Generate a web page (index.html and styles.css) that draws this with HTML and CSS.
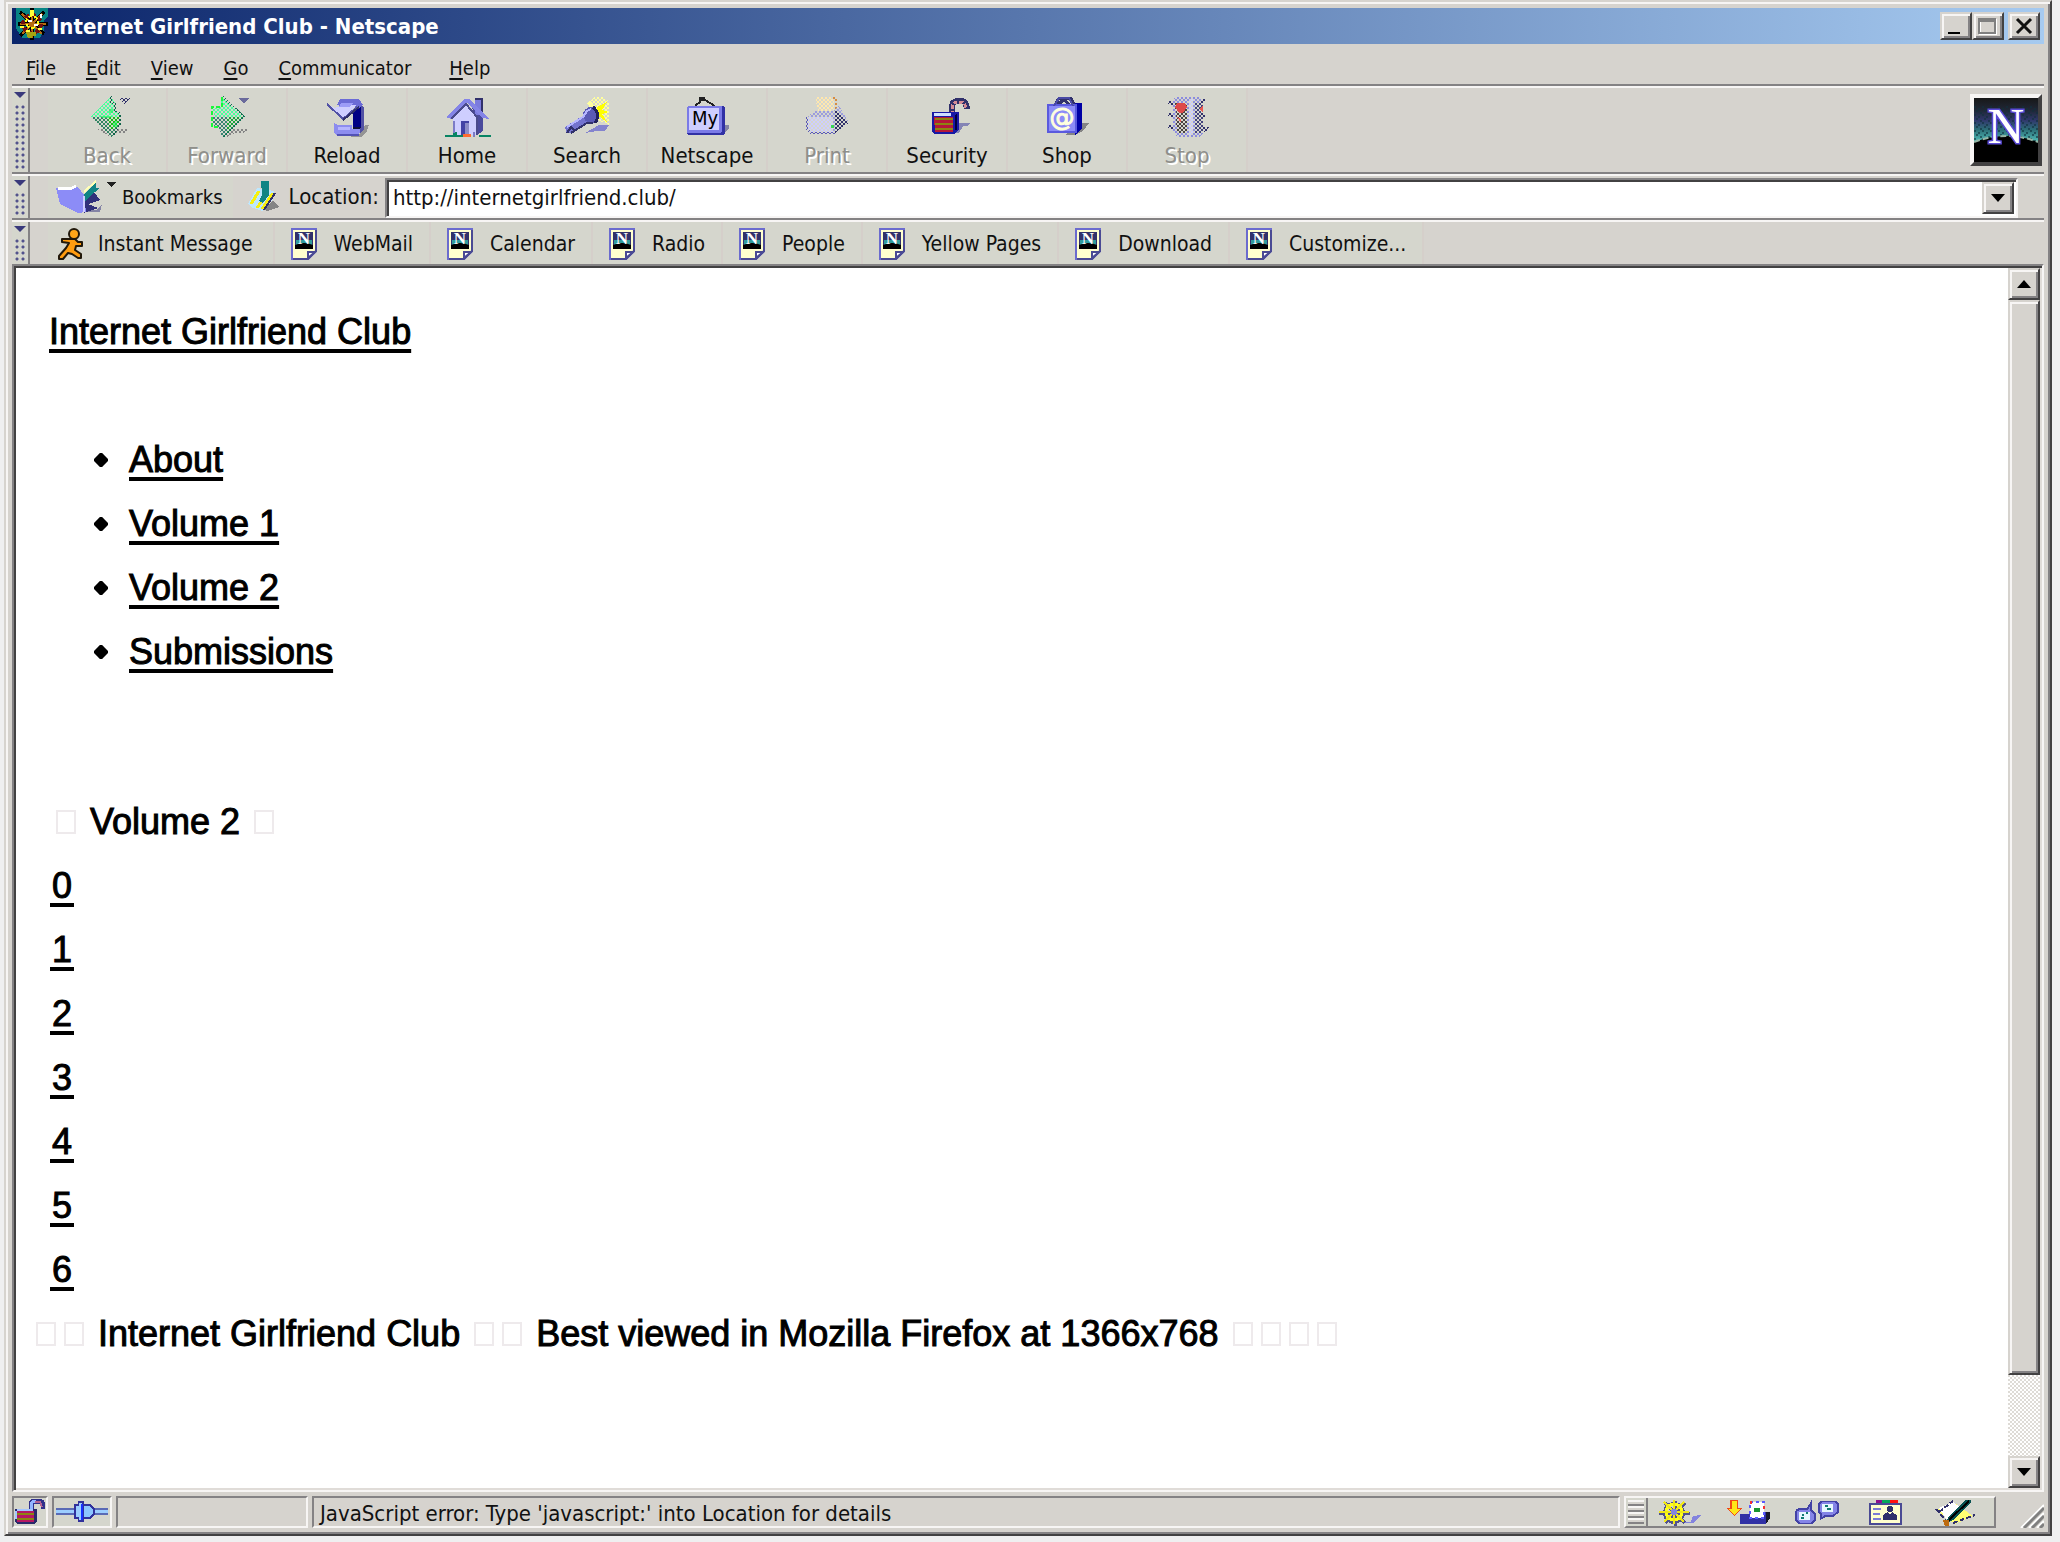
FILE: index.html
```html
<!DOCTYPE html>
<html lang="en">
<head>
<meta charset="utf-8">
<title>Internet Girlfriend Club - Netscape</title>
<link rel="stylesheet" href="styles.css">
</head>
<body>
<svg class="defs" aria-hidden="true">
  <defs>
    <pattern id="dither" width="4" height="4" patternUnits="userSpaceOnUse">
      <rect width="2" height="2" fill="#d5d6cd"/><rect x="2" y="2" width="2" height="2" fill="#d5d6cd"/>
    </pattern>
    <linearGradient id="night" x1="0" y1="0" x2="0" y2="1">
      <stop offset="0" stop-color="#181818"/><stop offset=".2" stop-color="#202838"/><stop offset=".35" stop-color="#30386c"/><stop offset=".5" stop-color="#2c7078"/><stop offset=".66" stop-color="#4cb4b0"/>
    </linearGradient>
    <pattern id="stars" width="8" height="8" patternUnits="userSpaceOnUse">
      <path d="M0 0h2v2h-2zM4 2h2v2h-2zM2 4h2v2h-2zM6 6h2v2h-2z" fill="#10303c"/>
    </pattern>
    <symbol id="page" viewBox="0 0 26 32">
      <path d="M1 1H25V23L17 31H1Z" fill="#ffffce" stroke="#6b6bce" stroke-width="2"/>
      <path d="M25 2V23L17 31H2" fill="none" stroke="#4a4a94" stroke-width="2"/>
      <path d="M17 30V24H24Z" fill="#fff" stroke="#4a4a94" stroke-width="2"/>
      <rect x="4" y="4" width="18" height="17" fill="#31316b"/>
      <path d="M5 12h16v5H5z" fill="#319c9c"/>
      <path d="M4 21v-4q9-4 18 0v4z" fill="#000"/>
      <text x="13" y="16" text-anchor="middle" font-family="Liberation Serif, serif" font-weight="bold" font-size="17" fill="#fff">N</text>
    </symbol>
  </defs>
</svg>

<div class="window">
  <header class="titlebar">
    <svg class="title-icon" viewBox="0 0 32 32" shape-rendering="crispEdges" aria-hidden="true">
      <path d="M0 0h32v8l-4 4v10l-4 8H6L0 20z" fill="#088484"/>
      <path d="M4 4l24 22M28 4L4 28M16 0v32M2 16h30" stroke="#000" stroke-width="4"/>
      <path d="M6 6l20 20M26 6L6 26M16 2v28M4 16h26" stroke="#b56b10" stroke-width="2"/>
      <circle cx="16" cy="16" r="9" fill="none" stroke="#731010" stroke-width="4" stroke-dasharray="4 3"/>
      <circle cx="16" cy="14" r="6" fill="none" stroke="#ffff10" stroke-width="2" stroke-dasharray="4 2"/>
      <path d="M14 2h4v6h-4zM4 18h4v2H4zM22 20h4v2h-4zM10 22h4v4h-4z" fill="#ffff39"/>
      <path d="M12 12h4v2h-4zM18 16h4v2h-4zM24 6h2v4h-2z" fill="#fff"/>
      <path d="M10 24h10v4h-4v2h-4z" fill="#a5a510"/>
    </svg>
    <h1>Internet Girlfriend Club - Netscape</h1>
    <div class="captions">
      <button class="raised" type="button" aria-label="Minimize"><svg viewBox="0 0 24 20" shape-rendering="crispEdges"><path d="M4 16h12v2H4z"/></svg></button>
      <button class="raised" type="button" aria-label="Maximize" disabled><svg viewBox="0 0 24 20" shape-rendering="crispEdges"><path d="M4 4h16v14H4z" fill="none" stroke="#fff" stroke-width="2"/><path d="M3 3h16v14H3zM3 5h16" fill="none" stroke="#808080" stroke-width="2"/></svg></button>
      <button class="raised close" type="button" aria-label="Close"><svg viewBox="0 0 24 20"><path d="M5 3l14 14M19 3L5 17" stroke="#111" stroke-width="3"/></svg></button>
    </div>
  </header>

  <nav class="menubar" aria-label="Menu">
    <button type="button"><u>F</u>ile</button>
    <button type="button"><u>E</u>dit</button>
    <button type="button"><u>V</u>iew</button>
    <button type="button"><u>G</u>o</button>
    <button type="button"><u>C</u>ommunicator</button>
    <button type="button" class="help"><u>H</u>elp</button>
  </nav>

  <div class="toolbar main">
    <span class="grip"></span>
    <div class="tools">
      <button type="button" disabled>
        <svg viewBox="0 0 44 44" shape-rendering="crispEdges"><path d="M12 34h32l-4 4H30l-4 4z" fill="#848484"/><path d="M26 1L5 22H36V18L30 14V8Z" fill="#4aff9c"/><path d="M5 22L26 43L34 32V22Z" fill="#318463"/><path d="M22 22h14l-4 10-6 4z" fill="#18bd18"/><path d="M26 1v6l4 2v6l5 4v11l-7 10" fill="none" stroke="#10634a" stroke-width="2"/><path d="M33 3h12l-6 6z" fill="#31316b"/><rect width="46" height="44" fill="url(#dither)"/><path d="M14 21h14l-4 2h-6zM24 14h4v4h-4zM30 26h2v6h-4v-4z" fill="#18f75a" opacity=".6"/></svg>
        <span>Back</span></button>
      <button type="button" disabled>
        <svg viewBox="0 0 44 44" shape-rendering="crispEdges"><path d="M20 34h24l-6 4H30l-8 4z" fill="#848484"/><path d="M17 1L39 22H10L8 14L16 12Z" fill="#4aff9c"/><path d="M39 22L18 43L14 34L8 30V22Z" fill="#398473"/><path d="M22 22h16L22 38z" fill="#18a539"/><path d="M17 1L39 22L18 43" fill="none" stroke="#107352" stroke-width="2"/><rect width="46" height="44" fill="url(#dither)"/><path d="M17 2V12H7V32H14" fill="none" stroke="#18f739" stroke-width="2" stroke-dasharray="4 2"/><path d="M34 3h10l-5 6z" fill="#6b6b9c"/></svg>
        <span>Forward</span></button>
      <button type="button">
        <svg viewBox="0 0 44 44" shape-rendering="crispEdges"><path d="M24 40h10l6-10h4l-2 6-6 6H26z" fill="#949494"/><path d="M28 14l8-6v28h-8V20z" fill="#000084"/><path d="M34 8l5 4v22l-3 4h-4l4-6V12z" fill="#5252a5"/><path d="M28 32h8l-4 6h-4z" fill="#10103a"/><path d="M15 4h19l4 6-4 3-6-2-7 1-9-2z" fill="#6b6bd6"/><path d="M2 9l8 4 8-3h13L18 24z" fill="#ceceff"/><path d="M16 8h12l-4 4H14z" fill="#9c9cf7"/><path d="M2 9L18 24L32 12" fill="none" stroke="#5252a5" stroke-width="2"/><path d="M18 25L34 12" stroke="#31316b" stroke-width="2"/><path d="M9 28l4 2h14v4h8v4l-4 3H13l-4-3z" fill="#8c8cef"/><path d="M13 32h12v3H13z" fill="#b5b5ff"/><path d="M12 40h22" stroke="#5252b5" stroke-width="2"/></svg>
        <span>Reload</span></button>
      <button type="button">
        <svg viewBox="0 0 44 44" shape-rendering="crispEdges"><path d="M8 22L22 8l10 14v18H8z" fill="#ceceff"/><path d="M24 8l14 14v14l-6 4V22z" fill="#4a4a9c"/><path d="M30 4h6v16h-6z" fill="#7b7bde"/><path d="M36 4h2v14h-2zM30 3h8v2h-8z" fill="#31316b"/><path d="M1 22L20 4h4l21 20-8-1-15-15L6 24z" fill="#8484e7"/><path d="M6 24L21 9L32 22v18" fill="none" stroke="#4a4a8c" stroke-width="2"/><path d="M16 26h8v14h-8z" fill="#4242a5"/><path d="M20 28h4v12h-4z" fill="#8c8cc6"/><path d="M0 40h8v-3h4v3h6v2H0zM34 40h12v2H34z" fill="#088463"/><path d="M18 39h8v3h-8z" fill="#ff6b31"/><path d="M28 37h2v5h-2zM8 26h2v12H8z" fill="#7b7bc6"/></svg>
        <span>Home</span></button>
      <button type="button">
        <svg viewBox="0 0 44 44" shape-rendering="crispEdges"><path d="M22 8l8-6h8l6 4v24l-10-4z" fill="#ffff9c"/><path d="M22 2h22v28H34V16z" fill="url(#dither)"/><path d="M32 12l10-5-5 8 7 2-7 2 5 8-10-7z" fill="#ffff00"/><path d="M20 38l14-8h10l-4 6h-8z" fill="#8484ce"/><path d="M0 32l14-9 6-3 8 6-10 4L6 38H2z" fill="#7373ce"/><circle cx="26" cy="20" r="8" fill="#5a5ab5"/><path d="M2 32l16-10 4-6 4-2" fill="none" stroke="#b5b5ff" stroke-width="2"/><path d="M28 12q8 7 2 16" fill="none" stroke="#21215a" stroke-width="3"/><path d="M2 38l4-6 4 4M6 38l16-10h6" fill="none" stroke="#31316b" stroke-width="2"/></svg>
        <span>Search</span></button>
      <button type="button">
        <svg viewBox="0 0 44 44" shape-rendering="crispEdges"><path d="M36 30h8v4l-8 6z" fill="#8484a5"/><path d="M10 11l6-5M20 5l10 6" stroke="#212121" stroke-width="2"/><path d="M14 2h6v4h-4v2h-2z" fill="#212121"/><rect x="2" y="11" width="38" height="29" rx="3" fill="#3131a5"/><rect x="2" y="11" width="35" height="27" rx="2" fill="#7b7be7"/><rect x="4" y="13" width="30" height="22" fill="#ceceff"/><text x="20" y="30" text-anchor="middle" font-family="DejaVu Sans Condensed, DejaVu Sans, sans-serif" font-size="20" fill="#000">My</text></svg>
        <span>Netscape</span></button>
      <button type="button" disabled>
        <svg viewBox="0 0 44 44" shape-rendering="crispEdges"><path d="M10 2h20l-2 18H14z" fill="#ffe7ad"/><path d="M26 3h5v13" fill="none" stroke="#d68c42" stroke-width="2"/><path d="M2 22l8-6h18l6-6 10 18-14 10H4l-2-4z" fill="#9c9cde"/><path d="M30 14l14 14-14 10V24z" fill="#31316b"/><path d="M2 22h26v16H4z" fill="#ceceff"/><path d="M2 22v12l4 4h24" fill="none" stroke="#5a5ab5" stroke-width="2"/><rect width="44" height="44" fill="url(#dither)"/><path d="M26 30h3v3h-3z" fill="#39d652"/></svg>
        <span>Print</span></button>
      <button type="button">
        <svg viewBox="0 0 44 44" shape-rendering="crispEdges"><path d="M32 28h14l-4 3h-4l-4 7h-4z" fill="#8484b5"/><path d="M27 20V12q0-6 6-6h4q4 0 5 8" fill="none" stroke="#31316b" stroke-width="6"/><path d="M27 20V12q0-5 6-5h4q3 0 4 7" fill="none" stroke="#d68c94" stroke-width="3" stroke-dasharray="4 2"/><path d="M7 17H34V34L30 39H9L7 37Z" fill="#1818a5"/><path d="M9 18H26V21H9z" fill="#cedeff"/><path d="M9 22H28V37H10z" fill="#b51839"/><path d="M10 23h18v2H10zM10 28h18v2H10zM10 33h18v2H10z" fill="#8c8410"/><path d="M32 18v17h-2V20z" fill="#000042"/></svg>
        <span>Security</span></button>
      <button type="button">
        <svg viewBox="0 0 44 44" shape-rendering="crispEdges"><path d="M36 28h8l-6 8-8 4H20z" fill="#848484"/><path d="M30 8h7v26l-7 6z" fill="#0000a5"/><path d="M9 12l5-9h12l4 9M13 10l6-6M19 5l7 6" fill="none" stroke="#31316b" stroke-width="3"/><path d="M2 9h30v29H2z" fill="#5a5ade"/><path d="M4 11h26v25H4z" fill="#8c8cf7"/><path d="M9 11l5-8h10l4 8" fill="none" stroke="#4a4aa5" stroke-width="2"/><text x="17" y="31" text-anchor="middle" font-family="DejaVu Sans, sans-serif" font-size="25" fill="#ffffde" stroke="#ffffde">@</text></svg>
        <span>Shop</span></button>
      <button type="button" disabled>
        <svg viewBox="0 0 44 44" shape-rendering="crispEdges"><path d="M10 2h24l4 4v32l-4 4H12l-4-6V6z" fill="#8c8cde"/><path d="M10 8h12v30H12z" fill="#4a4242"/><path d="M30 8h8v30h-8z" fill="#42427b"/><path d="M2 6h6v4H4zM2 18h6v4H4zM2 30h6v4H4zM36 4h4v4h-4zM36 18h4v4h-4zM36 32h8l-4 6z" fill="#31316b"/><path d="M24 4h4v36h-4z" fill="#ceceff"/><rect width="44" height="44" fill="url(#dither)"/><path d="M12 8h8l2 4-4 6h-4l-4-6z" fill="#de4a4a"/><path d="M34 14l4-4v8zM12 22l4 2v4z" fill="#e75a52"/></svg>
        <span>Stop</span></button>
    </div>
    <a class="logo" href="#" aria-label="Netscape">
      <svg viewBox="0 0 64 64"><rect width="64" height="64" fill="url(#night)"/><rect y="8" width="64" height="36" fill="url(#stars)" opacity=".6"/><path d="M0 64V44Q32 32 64 44V64Z" fill="#000"/><path d="M0 44Q32 32 64 44" fill="none" stroke="#94b5a5" stroke-width="2" stroke-dasharray="6 3"/><text x="32" y="45" text-anchor="middle" font-family="Liberation Serif, serif" font-size="51" fill="#fff" stroke="#5a4ad6" stroke-width="3" paint-order="stroke">N</text></svg>
    </a>
  </div>

  <div class="toolbar location">
    <span class="grip"></span>
    <button class="bookmarks" type="button">
      <svg viewBox="0 0 62 34" shape-rendering="crispEdges"><path d="M28 30h12l6-6-2 8H30z" fill="#8484a5"/><path d="M26 16l12-4 6 8-12 4 10 4-14 5z" fill="#31317b"/><path d="M0 8l12 2 10-3 6 8 2 17-8 1-18-9z" fill="#8c8cf7"/><path d="M2 8l12 1 6-3" stroke="#fff" stroke-width="3" fill="none"/><path d="M28 14L40 2v6h4L34 16l-6 6z" fill="#108484"/><path d="M28 12L40 1" stroke="#ffffb5" stroke-width="2"/><path d="M28 16v16" stroke="#ceceff" stroke-width="2"/><path d="M50 2h10l-5 5z" fill="#212121"/></svg>
      <span>Bookmarks</span></button>
    <svg class="quickfile" viewBox="0 0 32 32" shape-rendering="crispEdges" aria-hidden="true"><path d="M16 28l10-8 6 6-12 4z" fill="#848484"/><path d="M1 23L10 7l17 3-1 8-10 12-10-3z" fill="#bde7ff"/><path d="M4 23l8-13M10 27l10-15M15 28l11-16" stroke="#f7ef10" stroke-width="3"/><path d="M14 0h8v14l-6 8-4-2 3-6z" fill="#108484"/><path d="M28 12L17 29" stroke="#31316b" stroke-width="2"/></svg>
    <label for="url">Location:</label>
    <div class="urlbox">
      <input id="url" type="text" value="http://internetgirlfriend.club/">
      <button class="raised" type="button" aria-label="Recent locations"><svg viewBox="0 0 14 8"><path d="M0 0h14L7 8z"/></svg></button>
    </div>
  </div>

  <div class="toolbar personal">
    <span class="grip"></span>
    <div class="links">
      <a href="#"><svg viewBox="0 0 26 32"><circle cx="16" cy="6" r="5" fill="#ffa518" stroke="#21180a" stroke-width="2"/><path d="M4 11l8 0h5l3 3h4v4h-6l-1 4 6 4v4h-3l-6-4-4-1-5 6H1v-3l7-8 3-5-7-1z" fill="#ff9c10" stroke="#21180a" stroke-width="2" stroke-linejoin="round"/></svg><span>Instant Message</span></a>
      <a href="#"><svg viewBox="0 0 26 32"><use href="#page"/></svg><span>WebMail</span></a>
      <a href="#"><svg viewBox="0 0 26 32"><use href="#page"/></svg><span>Calendar</span></a>
      <a href="#"><svg viewBox="0 0 26 32"><use href="#page"/></svg><span>Radio</span></a>
      <a href="#"><svg viewBox="0 0 26 32"><use href="#page"/></svg><span>People</span></a>
      <a href="#"><svg viewBox="0 0 26 32"><use href="#page"/></svg><span>Yellow Pages</span></a>
      <a href="#"><svg viewBox="0 0 26 32"><use href="#page"/></svg><span>Download</span></a>
      <a href="#"><svg viewBox="0 0 26 32"><use href="#page"/></svg><span>Customize...</span></a>
    </div>
  </div>

  <div class="viewport">
    <main>
      <p><a href="#">Internet Girlfriend Club</a></p>
      <ul>
        <li><a href="#">About</a></li>
        <li><a href="#">Volume 1</a></li>
        <li><a href="#">Volume 2</a></li>
        <li><a href="#">Submissions</a></li>
      </ul>
      <h2><i class="box"></i> Volume 2 <i class="box"></i></h2>
      <p><a class="num" href="#">0</a></p>
      <p><a class="num" href="#">1</a></p>
      <p><a class="num" href="#">2</a></p>
      <p><a class="num" href="#">3</a></p>
      <p><a class="num" href="#">4</a></p>
      <p><a class="num" href="#">5</a></p>
      <p><a class="num" href="#">6</a></p>
      <footer><i class="box"></i><i class="box"></i> Internet Girlfriend Club <i class="box"></i><i class="box"></i> Best viewed in Mozilla Firefox at 1366x768 <i class="box"></i><i class="box"></i><i class="box"></i><i class="box"></i></footer>
    </main>
    <div class="scrollbar">
      <button class="raised" type="button" aria-label="Scroll up"><svg viewBox="0 0 14 8"><path d="M0 8h14L7 0z"/></svg></button>
      <div class="thumb raised"></div>
      <div class="trough"></div>
      <button class="raised" type="button" aria-label="Scroll down"><svg viewBox="0 0 14 8"><path d="M0 0h14L7 8z"/></svg></button>
    </div>
  </div>

  <div class="statusbar">
    <div class="panel secure"><svg viewBox="0 0 30 26" shape-rendering="crispEdges"><path d="M16 12V6q0-4 5-4h3q4 0 5 8" fill="none" stroke="#31318c" stroke-width="5"/><path d="M16 12V6q0-4 5-4" fill="none" stroke="#94b5ff" stroke-width="3"/><path d="M20 3h5l2 5" fill="none" stroke="#b56394" stroke-width="2"/><path d="M0 10h22v12l-2 3H2l-2-3z" fill="#29296b"/><path d="M2 12h17v11H2z" fill="#b51863"/><path d="M2 14h17v2H2zM2 19h17v2H2z" fill="#8c8410"/><path d="M2 10h16v2H2zM0 12h2v8H0z" fill="#a5c6ff"/></svg></div>
    <div class="panel plug"><svg viewBox="0 0 52 24" shape-rendering="crispEdges"><path d="M0 8h20v7H0zM36 8h16v7H36z" fill="#5a6bb5"/><path d="M0 10h20v3H0zM36 10h16v3H36z" fill="#9cceff"/><path d="M18 4h4V1h6v3h6l5 5v5l-5 5h-6v3h-6v-3h-4z" fill="#31319c"/><path d="M20 6h3V3h3v17h-3v-3h-3z" fill="#9cceff"/><path d="M28 6h5l4 4v3l-4 4h-5z" fill="#8cc6ff"/><path d="M25 4h2v16h-2z" fill="#1831ff"/></svg></div>
    <div class="panel progress"></div>
    <div class="panel message">JavaScript error: Type 'javascript:' into Location for details</div>
    <div class="components">
      <span class="lines"></span>
      <button type="button" aria-label="Navigator"><svg viewBox="0 0 44 26" shape-rendering="crispEdges"><path d="M26 22h8l2-6 8-1-8 8H24z" fill="#8484de"/><circle cx="17" cy="13" r="9" fill="none" stroke="#52528c" stroke-width="4"/><path d="M18 1v25M2 13h31M8 3l20 20M28 3L8 23" stroke="#52528c" stroke-width="3"/><circle cx="17" cy="12" r="8" fill="none" stroke="#ffff18" stroke-width="3"/><path d="M17 0v24M2 12h30M7 2l20 20M27 2L7 22" stroke="#efe718" stroke-width="2"/><circle cx="17" cy="12" r="3" fill="#8484de"/></svg></button>
      <button type="button" aria-label="Inbox"><svg viewBox="0 0 44 26" shape-rendering="crispEdges"><path d="M4 0h8v8h4l-8 8-8-8h4z" fill="#ef4a18"/><path d="M6 1h5v8h3l-6 6-5-6h3z" fill="#ffe718"/><path d="M14 14h10l2-2h18l-4 12H14z" fill="#3131a5"/><path d="M40 12h4v6l-4 6z" fill="#18182a"/><path d="M24 2h14v16H24z" fill="#fff" stroke="#5a5aff" stroke-width="2" stroke-dasharray="3 3"/><path d="M28 8h6v4h-6z" fill="#189431"/><path d="M24 1h2v3h-2zM37 6h2v3h-2z" fill="#f73131"/></svg></button>
      <button type="button" aria-label="Newsgroups"><svg viewBox="0 0 46 26" shape-rendering="crispEdges"><path d="M1 13q0-4 5-4h7l4-7v8l4 4v6l-4 4H5l-4-4z" fill="#8484e7" stroke="#4242a5" stroke-width="2"/><path d="M4 12h12v8H4z" fill="#e7f7ff"/><path d="M7 15h2M11 13h3M6 18h3" stroke="#107b73" stroke-width="2"/><path d="M25 3l3-2h14l3 3v8l-5 4H32l-5 3V14l-2-2z" fill="#8484e7" stroke="#4242a5" stroke-width="2"/><path d="M28 4h12v8H28z" fill="#e7f7ff"/><path d="M31 6h4M33 9h5" stroke="#107b73" stroke-width="2"/></svg></button>
      <button type="button" aria-label="Address Book"><svg viewBox="0 0 44 26" shape-rendering="crispEdges"><path d="M12 0h6v4h-6z" fill="#8c108c"/><path d="M18 0h8v4h-8z" fill="#08a55a"/><path d="M26 0h8v4h-8z" fill="#ff1010"/><path d="M6 4h31v20H6z" fill="#ffffce" stroke="#4a4a94" stroke-width="2"/><path d="M9 9h8M9 14h7M9 19h8" stroke="#7b7bd6" stroke-width="2"/><circle cx="26" cy="9" r="3" fill="#31316b"/><path d="M19 20v-5l5-3 2 3 2-3 5 3v5z" fill="#31316b"/></svg></button>
      <button type="button" aria-label="Composer"><svg viewBox="0 0 44 26" shape-rendering="crispEdges"><path d="M4 10l16-8 20 14-18 8-6-4z" fill="#ffff73"/><path d="M6 8l14-6 8 6-14 12z" fill="#fff"/><path d="M3 9l11 13M20 23l22-8M6 12l14-11" stroke="#31316b" stroke-width="2" stroke-dasharray="5 2" fill="none"/><path d="M12 24l4-8L32 0h6v3L20 20z" fill="#085252"/><path d="M16 20L36 1" stroke="#000" stroke-width="2"/><path d="M10 20h6v6h-4z" fill="#bd6b10"/></svg></button>
    </div>
    <svg class="resize" viewBox="0 0 24 24" aria-hidden="true"><path d="M1 24L24 1M9 24L24 9M17 24L24 17" stroke="#fff" stroke-width="2"/><path d="M4 24L24 4M12 24L24 12M20 24L24 20" stroke="#808080" stroke-width="3"/></svg>
  </div>
</div>
</body>
</html>
```

FILE: styles.css
```css
* { box-sizing: border-box; }

:root {
  --face: #d6d3ce;
  --tint: #d5d6cd;
  --shade: #848284;
  --dark: #424142;
  --light: #f7f5f4;
}

body {
  margin: 0;
  padding: 0 8px 6px 4px;
  min-height: 100vh;
  display: flex;
  background: #efeff0;
  color: #111;
  font: 22px/24px "DejaVu Sans Condensed", "DejaVu Sans", sans-serif;
}

.defs { position: absolute; width: 0; height: 0; }

button {
  margin: 0;
  padding: 0;
  border: 0;
  background: none;
  color: inherit;
  font: inherit;
}

svg { display: block; flex: none; }

.window {
  flex: 1;
  min-width: 0;
  display: flex;
  flex-direction: column;
  padding: 6px;
  border: 2px solid;
  border-color: var(--face) var(--dark) var(--dark) var(--face);
  background: var(--face);
  box-shadow: inset 2px 2px var(--light), inset -2px -2px var(--shade);
}

.raised {
  display: grid;
  place-items: center;
  background: var(--face);
  border: 2px solid;
  border-color: var(--face) var(--dark) var(--dark) var(--face);
  box-shadow: inset 2px 2px var(--light), inset -2px -2px var(--shade);
}

/* Title bar */
.titlebar {
  display: flex;
  align-items: center;
  height: 36px;
  padding: 0 4px;
  background: linear-gradient(90deg, #0a246a, #a6caf0);
  color: #fff;
}
.titlebar h1 {
  flex: 1;
  margin: 2px 0 0 4px;
  font-size: 22px;
  line-height: 36px;
  font-weight: bold;
}
.title-icon { width: 32px; height: 32px; margin-bottom: 4px; }
.captions { display: flex; }
.captions button { width: 32px; height: 28px; }
.captions svg { width: 24px; height: 20px; }
.captions .close { margin-left: 4px; }

/* Menu bar */
.menubar {
  display: flex;
  gap: 30px;
  height: 44px;
  padding: 5px 14px 0;
  border-bottom: 2px solid var(--light);
  box-shadow: inset 0 -2px var(--shade);
  font-size: 20px;
}
.menubar u { text-decoration-thickness: 2px; text-underline-offset: 3px; }
.menubar .help { margin-left: 8px; }

/* Toolbars */
.toolbar {
  display: flex;
  padding-bottom: 2px;
  border-bottom: 2px solid var(--light);
  box-shadow: inset 0 -2px var(--shade);
}
.grip {
  width: 18px;
  padding: 4px 2px 4px;
  border-right: 2px solid var(--shade);
  background: var(--tint);
}
.grip::before {
  content: "";
  display: block;
  border: 6px solid transparent;
  border-top-color: #39397b;
  border-bottom: 0;
}
.grip::after {
  content: "";
  display: block;
  height: calc(100% - 10px);
  margin-top: 6px;
  background:
    radial-gradient(circle at 3px 3px, #52528c 1px, transparent 2px) 0 0 / 6px 6px;
}

.main { height: 88px; }
.tools { display: flex; flex: 1; padding-left: 18px; }
.tools button {
  display: flex;
  flex-direction: column;
  align-items: center;
  gap: 5px;
  width: 120px;
  padding-top: 7px;
  background: var(--tint);
  border-right: 2px solid #d5cfca;
}
.tools svg { width: 44px; height: 44px; overflow: visible; }
.tools button:disabled { color: #8f8f8b; text-shadow: 2px 2px #fff; }
.logo {
  width: 72px;
  height: 72px;
  margin: 6px 2px;
  border: 4px solid;
  border-color: var(--light) var(--dark) var(--dark) var(--light);
}
.logo svg { width: 64px; height: 64px; }

.location { height: 46px; align-items: stretch; }
.bookmarks {
  display: flex;
  align-items: center;
  gap: 4px;
  margin-left: 18px;
  padding: 0 10px 0 8px;
  background: var(--tint);
  font-size: 20px;
}
.bookmarks svg { width: 62px; height: 34px; }
.quickfile { align-self: center; width: 32px; height: 32px; margin-left: 14px; }
.location label { align-self: center; margin-left: 10px; }
.urlbox {
  flex: 1;
  display: flex;
  margin: 2px 26px 0 6px;
  border: 2px solid;
  border-color: var(--shade) var(--light) var(--light) var(--shade);
  box-shadow: inset 2px 2px var(--dark);
  padding: 2px;
  background: #fff;
}
.urlbox input {
  flex: 1;
  min-width: 0;
  padding: 0 4px;
  border: 0;
  background: none;
  color: #111;
  font: inherit;
  outline: 0;
}
.urlbox button { width: 32px; }
.urlbox svg, .scrollbar svg { width: 14px; height: 8px; }

.personal { height: 42px; padding: 0; border: 0; box-shadow: none; font-size: 21px; }
.links { display: flex; padding-left: 18px; }
.links a {
  display: flex;
  align-items: center;
  gap: 17px;
  padding: 2px 16px 0;
  background: var(--tint);
  border-right: 2px solid #d5cfca;
  color: inherit;
  text-decoration: none;
}
.links a:first-child { gap: 14px; padding: 2px 20px 0 10px; }
.links svg { width: 26px; height: 32px; }

/* Page area */
.viewport {
  flex: 1;
  display: flex;
  border: 2px solid;
  border-color: var(--shade) var(--light) var(--light) var(--shade);
  padding: 2px;
  box-shadow: inset 2px 2px var(--dark), inset -2px -2px #e0dcd8;
  background: #fff;
}
main {
  flex: 1;
  padding: 32px 16px 32px;
  color: #000;
  font: 36px/64px "Liberation Sans", Arial, sans-serif;
  -webkit-text-stroke: 1px;
}
main p, main h2 { margin: 0 0 0 16px; font: inherit; }
main a {
  padding: 0 1px;
  color: inherit;
  text-decoration: underline;
  text-decoration-thickness: 4px;
  text-underline-offset: 5px;
  text-decoration-skip-ink: none;
}
main .num {
  display: inline-block;
  height: 56px;
  margin: 0 2px;
  padding: 0 2px;
  background: linear-gradient(#000, #000) 0 49px / 100% 4px no-repeat;
  text-decoration: none;
}
main ul { margin: 64px 0 106px 16px; padding: 0 0 0 46px; list-style: none; }
main li { display: flex; align-items: center; gap: 22px; }
main li::before {
  content: "";
  width: 14px;
  height: 14px;
  margin-right: -2px;
  background: #000;
  clip-path: polygon(42% 0, 58% 0, 100% 42%, 100% 58%, 58% 100%, 42% 100%, 0 58%, 0 42%);
}
main h2 { margin-left: 20px; }
.box {
  display: inline-block;
  width: 20px;
  height: 24px;
  margin: 0 4px;
  border: 2px solid #eeeaec;
}

.scrollbar { display: flex; flex-direction: column; width: 32px; }
.scrollbar button { height: 32px; }
.thumb { flex: 93; }
.trough {
  flex: 7;
  background: repeating-conic-gradient(#fff 0 25%, #dedbd6 0 50%) 0 0 / 4px 4px;
}

/* Status bar */
.statusbar { display: flex; gap: 4px; height: 36px; padding-top: 4px; }
.panel {
  display: flex;
  align-items: center;
  border: 2px solid;
  border-color: var(--shade) var(--light) var(--light) var(--shade);
}
.secure, .plug { justify-content: center; background: var(--tint); }
.secure { width: 36px; }
.secure svg { width: 30px; height: 26px; }
.plug { width: 60px; }
.plug svg { width: 52px; height: 24px; }
.progress { width: 192px; }
.message { flex: 1; padding: 3px 0 0 6px; }
.components {
  display: flex;
  width: 372px;
  border: 2px solid;
  border-color: var(--light) var(--shade) var(--shade) var(--light);
  background: var(--tint);
}
.lines {
  width: 22px;
  border-right: 2px solid var(--shade);
  background: repeating-linear-gradient(var(--light) 0 2px, var(--face) 2px 4px, var(--shade) 4px 6px) 2px 2px / 16px 24px no-repeat;
}
.components button { flex: 1; display: flex; justify-content: center; padding: 2px 8px 0 0; }
.components button svg { width: 44px; height: 26px; }
.resize { align-self: flex-end; width: 24px; height: 24px; margin-left: 20px; }
```
